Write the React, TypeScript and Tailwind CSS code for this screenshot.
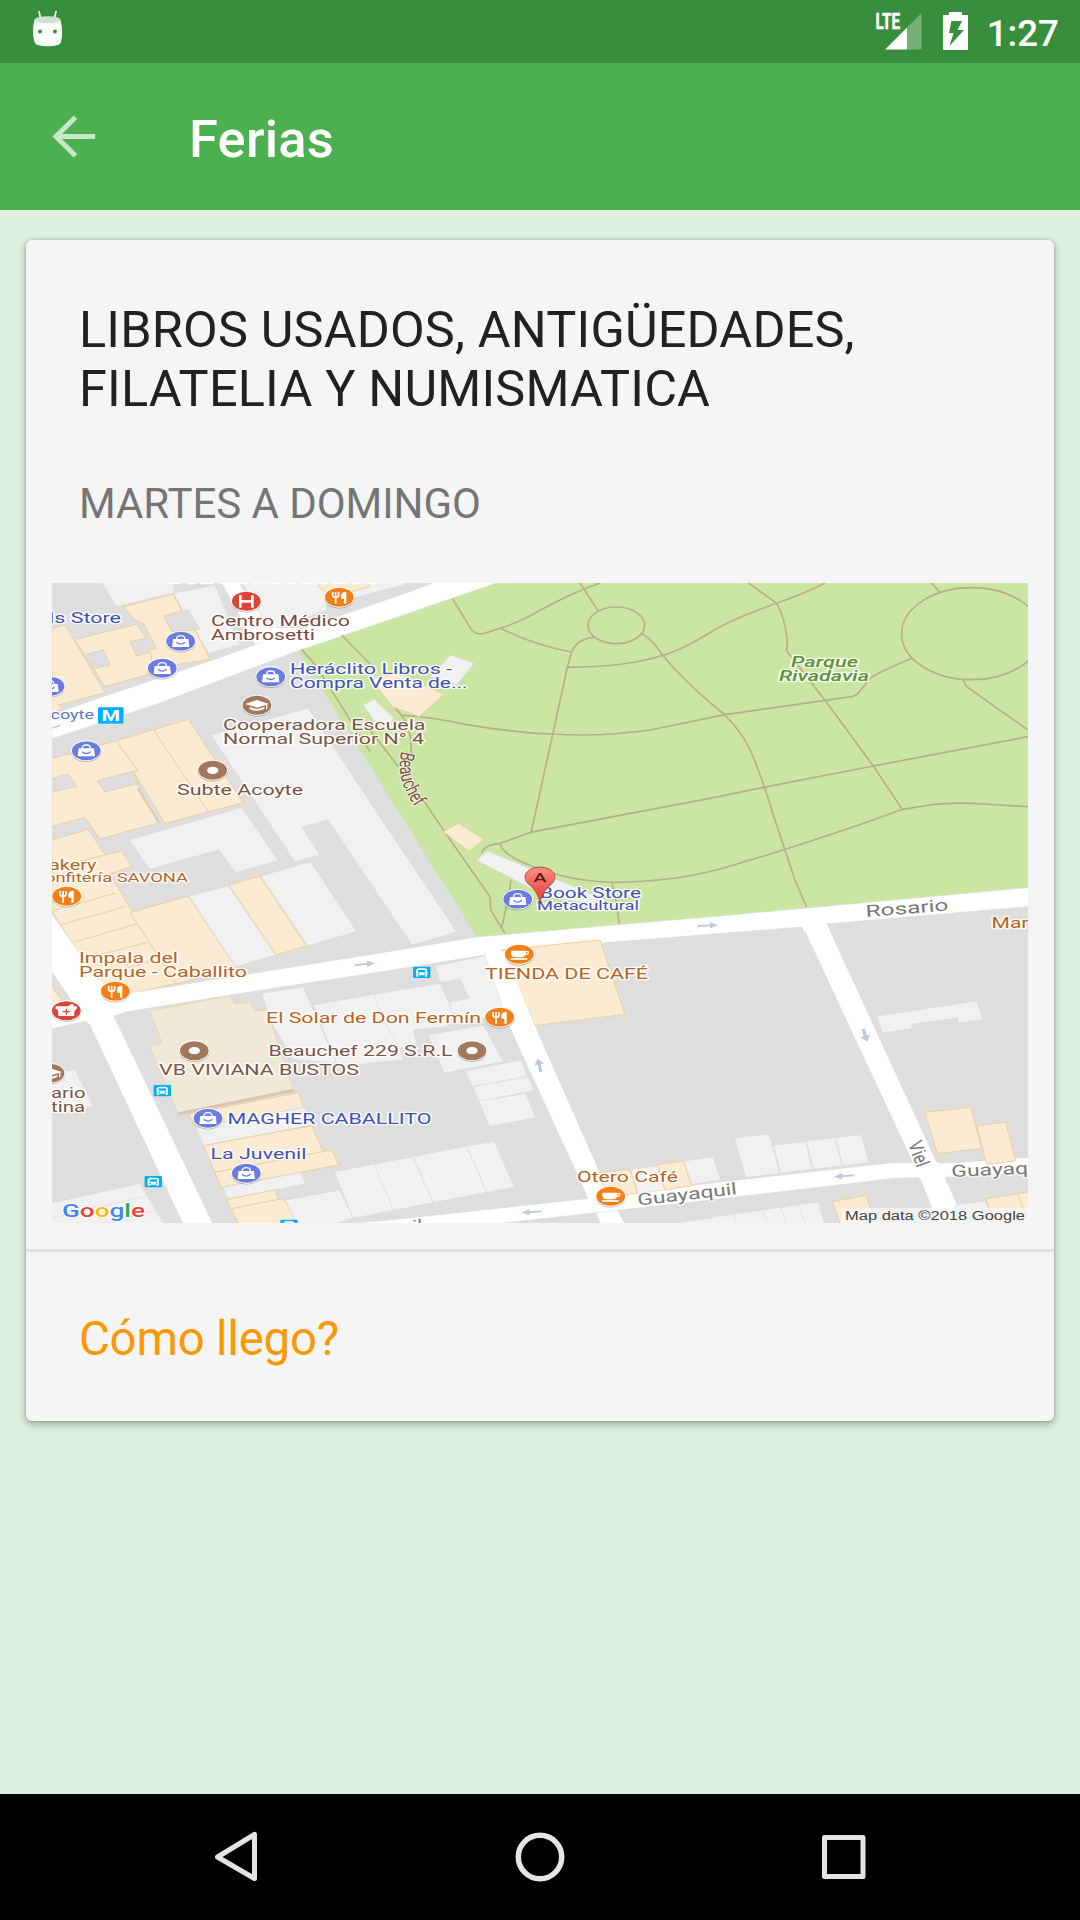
import type { ReactNode } from 'react';

type Kind = 'grey' | 'sand' | 'tan' | 'ground';

const FILL: Record<Kind, string> = {
  grey: 'fill-[#f1f1f1] stroke-[#d9d9d9]',
  sand: 'fill-[#faebd2] stroke-[#ebd0a0]',
  tan: 'fill-[#f0e9d8] stroke-[#ecd7ae]',
  ground: 'fill-[#dedede] stroke-[#e3d2b3]',
};

/** Map tile: geometry inside is in third-pixels from the tile's origin. */
function Tile({ x, y, children }: { x: number; y: number; children: ReactNode }) {
  return <g transform={`translate(${x} ${y}) scale(0.33333)`}>{children}</g>;
}

function Lots({ items }: { items: [Kind, string][] }) {
  return (
    <>
      {items.map(([kind, points]) => (
        <polygon key={points} points={points} className={FILL[kind]} strokeWidth={kind === 'grey' ? 2 : 3} />
      ))}
    </>
  );
}

const C = {
  shop: '#3f51b5',
  food: '#b5651d',
  place: '#795548',
  road: '#777777',
};

type LabelProps = { x: number; y: number; w: number; color: string; size?: number; rotate?: number; children: string };

function Label({ x, y, w, color, size = 14, rotate = 0, children }: LabelProps) {
  return (
    <text
      x={x}
      y={y}
      textLength={w}
      lengthAdjust="spacingAndGlyphs"
      fontSize={size}
      fill={color}
      stroke="#ffffff"
      strokeOpacity={0.85}
      strokeWidth={2.6}
      strokeLinejoin="round"
      paintOrder="stroke"
      transform={rotate ? `rotate(${rotate} ${x} ${y})` : undefined}
    >
      {children}
    </text>
  );
}

function Badge({ x, y, color, children }: { x: number; y: number; color: string; children: ReactNode }) {
  return (
    <g transform={`translate(${x} ${y}) scale(0.33333)`}>
      <ellipse cx="0" cy="3" rx="46" ry="31" fill="#000" opacity="0.22" />
      <ellipse rx="46" ry="31" fill="#fff" />
      <ellipse rx="43" ry="28.5" fill={color} />
      {children}
    </g>
  );
}

const Shop = ({ x, y }: { x: number; y: number }) => (
  <Badge x={x} y={y} color="#6b7ce0">
    <path d="M-12 -6V-8Q-12 -17 0 -17Q12 -17 12 -8V-6" fill="none" stroke="#fff" strokeWidth="4" />
    <path d="M-23 -7H23L26 17H-26Z" fill="#fff" />
    <path d="M-13 3Q0 14 13 3" fill="none" stroke="#6b7ce0" strokeWidth="4" />
  </Badge>
);

const Food = ({ x, y }: { x: number; y: number }) => (
  <Badge x={x} y={y} color="#f57f17">
    <path d="M-20 -16V-6Q-20 0 -11 0Q-2 0 -2 -6V-16M-11 -16V19" fill="none" stroke="#fff" strokeWidth="5" />
    <path d="M21 -17V19H14V4H5V-6Q6 -17 21 -17Z" fill="#fff" />
  </Badge>
);

const Cafe = ({ x, y }: { x: number; y: number }) => (
  <Badge x={x} y={y} color="#f57f17">
    <path d="M-25 -11H20V-3Q18 9 8 9H-12Q-25 9 -25 -3Z" fill="#fff" />
    <path d="M19 -8H25Q28 -8 27 -3Q25 1 17 1" fill="none" stroke="#fff" strokeWidth="4" />
    <path d="M-26 14H24" stroke="#fff" strokeWidth="5" />
  </Badge>
);

const School = ({ x, y }: { x: number; y: number }) => (
  <Badge x={x} y={y} color="#a1785c">
    <path d="M-36 -4L0 -16L36 -4L0 7Z" fill="#fff" />
    <path d="M-22 5L0 12L22 5V11Q0 22 -22 11Z" fill="#fff" />
    <path d="M29 -3V12" stroke="#fff" strokeWidth="4" />
  </Badge>
);

const Dot = ({ x, y }: { x: number; y: number }) => (
  <Badge x={x} y={y} color="#a1785c">
    <ellipse rx="17" ry="11" fill="#fff" />
  </Badge>
);

const Bus = ({ x, y }: { x: number; y: number }) => (
  <g transform={`translate(${x} ${y}) scale(0.33333)`}>
    <rect x="-26" y="-17" width="52" height="34" rx="3" fill="#00b0ff" />
    <path d="M-17 -4Q-17 -12 -8 -12H8Q17 -12 17 -4V9H-17Z" fill="#fff" />
    <path d="M-11 -7H11V0H-11Z" fill="#00b0ff" />
    <circle cx="-10" cy="5" r="2.5" fill="#00b0ff" />
    <circle cx="10" cy="5" r="2.5" fill="#00b0ff" />
    <path d="M-13 9V13M13 9V13" stroke="#fff" strokeWidth="6" />
  </g>
);

const Arrow = ({ x, y, r }: { x: number; y: number; r: number }) => (
  <path d="M-10 -.9H2V-3.2L10 0L2 3.2V.9H-10Z" fill="#bfc8da" transform={`translate(${x} ${y}) rotate(${r})`} />
);

function ParkMap() {
  return (
    <svg viewBox="52 583 976 640" className="mx-[26px] block h-[640px] w-[976px] overflow-hidden font-['Roboto',sans-serif]">
      <defs>
        <linearGradient id="pin" x1="0" y1="0" x2="0" y2="1">
          <stop offset="0" stopColor="#fb8f85" />
          <stop offset="1" stopColor="#ea3b33" />
        </linearGradient>
      </defs>
      <rect x="52" y="583" width="976" height="640" fill="#dedede" />

      <polygon points="497,583 1028,583 1028,888 720,916 477,937 298,651" fill="#cbe6a3" />

      <Tile x={40} y={570}>
        <Lots
          items={[
            ['grey', '180,30 230,110 405,68 395,30'],
            ['grey', '400,70 525,45 600,225 505,250 465,180 480,178 445,120 430,122'],
            ['grey', '600,30 860,30 860,120 690,182'],
            ['grey', '850,30 1110,30 1090,45 880,100'],
            ['sand', '835,50 850,30 980,30 990,50 880,80'],
            ['sand', '250,110 400,72 425,122 372,138 395,185 465,180 510,268 340,295 325,240 350,235 310,160 285,150'],
            ['sand', '36,175 75,165 195,368 55,405 70,415 36,430'],
            ['sand', '105,208 290,163 320,205 270,215 290,258 330,245 345,308 195,350'],
            ['ground', '130,255 190,240 210,285 165,295'],
            ['sand', '36,565 230,512 293,602 172,633 195,665 275,615 358,758 180,807 135,742 36,770'],
            ['sand', '230,512 445,448 610,698 375,760 280,605 293,602'],
            ['ground', '172,633 275,605 295,640 195,665'],
            ['ground', '30,628 85,612 110,648 30,668'],
          ]}
        />
        <path d="M340 478L505 725" stroke="#ebd0a0" strokeWidth="3" fill="none" />
        <path d="M293 655L355 755" stroke="#d6ceba" strokeWidth="7" fill="none" />
      </Tile>
      <polygon points="211,735 308,708 380,817 457,932 412,945 328,820 302,827 320,855 295,862" className={FILL.grey} strokeWidth="0.7" />

      <Tile x={40} y={800}>
        <Lots
          items={[
            ['grey', '268,120 605,22 715,182 587,218 537,150 328,208'],
            ['sand', '36,120 145,88 195,165 245,153 275,200 210,222 355,470 410,550 270,582 185,565 36,335'],
            ['sand', '270,338 445,288 587,500 550,510 410,552'],
            ['grey', '447,288 565,257 708,465 587,500'],
            ['sand', '567,255 660,228 800,438 708,465'],
            ['grey', '662,228 812,185 950,395 803,437'],
            ['sand', '30,550 72,610 30,625'],
          ]}
        />
        <path d="M36 333L225 280M60 375L255 320M100 427L290 372M135 475L325 427M200 520L350 480M195 165L36 205" stroke="#ebd0a0" strokeWidth="3" fill="none" />
      </Tile>

      <Tile x={380} y={800}>
        <Lots
          items={[
            ['grey', '-200,615 -20,583 180,550 225,645 200,680 100,690 110,735 60,745 70,780 -130,800'],
            ['grey', '165,497 315,468 392,640 330,660 215,640 210,605 268,595 240,538 180,548'],
            ['grey', '-355,580 -230,560 -130,790 -260,778 -330,660'],
          ]}
        />
        <path d="M-20 583L10 660L60 745M-175 680L-130 790" stroke="#d9d9d9" strokeWidth="2" fill="none" />
      </Tile>

      <Tile x={40} y={1010}>
        <Lots
          items={[
            ['tan', '330,2 570,-43 585,-18 630,-22 645,2 680,0 762,242 415,312 328,108 365,98'],
            ['sand', '445,312 775,248 793,292 468,352'],
            ['grey', '468,352 793,292 815,345 490,407'],
            ['sand', '490,407 815,347 850,425 525,487'],
            ['sand', '525,487 875,420 897,465 543,532'],
            ['grey', '548,532 780,488 798,522 565,567'],
            ['sand', '560,568 705,540 715,568 735,570 775,648 600,648'],
            ['grey', '735,570 900,540 940,625 850,650 775,650'],
            ['grey', '30,580 300,520 375,648 30,648'],
            ['grey', '30,192 105,178 160,288 100,300 30,310'],
          ]}
        />
        <path d="M415 311L762 241" stroke="#dcc4b2" strokeWidth="9" />
        <path d="M36 625L320 558M150 648L345 602" stroke="#d9d9d9" strokeWidth="2" />
        <path d="M575 596L715 568" stroke="#ebd0a0" strokeWidth="3" />
      </Tile>

      <Tile x={380} y={1010}>
        <Lots
          items={[
            ['grey', '145,75 310,45 370,155 192,190'],
            ['grey', '255,182 425,150 443,200 278,230'],
            ['grey', '278,230 443,200 463,242 297,274'],
            ['grey', '297,274 437,250 467,323 327,350'],
            ['grey', '-138,485 98,440 160,578 -80,625'],
            ['grey', '98,440 260,408 320,547 160,578'],
            ['grey', '260,408 343,394 403,532 320,547'],
            ['grey', '870,642 1022,618 1315,575 1335,645'],
          ]}
        />
        <path d="M-18 463L40 600" stroke="#d9d9d9" strokeWidth="2" />
        <path d="M965 628L970 642" stroke="#d9d9d9" strokeWidth="2" />
      </Tile>

      <g fill="#ffffff" stroke="#d8d8d8" strokeWidth="0.5">
        <polygon points="220,580 237,580 271,630 290,650 257,648" />
        <polygon points="45,717 105,696 210,661 257,644 380,602 412,591 440,580 505,580 380,623 300,650 160,703 45,741" />
        <polygon points="45,904 102,985 130,993 230,977 380,953 477,937 720,916 1035,887 1035,906 826,924 802,927 600,943 485,955 380,972 230,995 113,1014 87,1021 45,1030 45,1005 73,1003 45,962" />
        <polygon points="87,1019 112,1012 214,1226 184,1226" />
        <polygon points="484,953 502,950 528,1010 600,1173 612,1200 626,1226 602,1226 588,1198 510,1028" />
        <polygon points="802,925 826,922 937,1163 945,1178 967,1226 939,1226 920,1178" />
        <polygon points="340,1224 380,1221 593,1198 720,1182 890,1163 950,1163 1035,1157 1035,1172 957,1177 897,1178 710,1200 503,1223 490,1228 340,1228" />
      </g>
      <g fill="#ffffff">
        <polygon points="257,650 272,628 300,628 300,646" />
        <polygon points="70,990 100,980 125,1012 88,1024" />
        <polygon points="484,948 500,948 506,962 488,962" />
        <polygon points="800,920 824,918 830,932 804,932" />
        <polygon points="585,1189 606,1187 616,1207 592,1209" />
        <polygon points="914,1164 938,1162 946,1179 920,1180" />
      </g>

      <g fill="none" stroke="#b9ad8b" strokeWidth="5" strokeLinejoin="round">
        <Tile x={40} y={570}>
          <path d="M785 238L830 290L990 545M905 195L990 282" />
        </Tile>
        <Tile x={380} y={570}>
          <path d="M218 87L272 175Q285 197 312 190Q400 165 455 135Q580 65 662 39" />
          <path d="M362 175Q460 225 575 246M600 39L654 122" />
          <ellipse cx="709" cy="166" rx="85" ry="55" />
          <path d="M642 202Q590 207 575 246L562 292L475 690L453 787" />
          <path d="M562 292Q740 292 848 256Q900 242 990 188" />
          <path d="M785 192Q810 200 848 256Q900 320 990 398" />
          <path d="M60 435Q150 440 260 464Q420 490 520 492Q650 502 810 480L1035 434" />
          <path d="M45 415Q100 460 93 560M-30 480L55 590M130 690L190 780M450 787L990 685" />
        </Tile>
        <Tile x={710} y={570}>
          <path d="M0 188Q60 150 200 100Q290 68 345 39M115 39L200 100Q222 135 232 210L230 243L345 391L490 588L578 720" />
          <path d="M45 434L345 391L425 380Q440 375 445 370L480 325Q500 310 605 265" />
          <ellipse cx="785" cy="191" rx="210" ry="138" />
          <path d="M665 39L690 68M760 330Q765 350 780 357L954 480" />
          <path d="M0 398L45 435Q110 500 135 575Q170 665 185 720L255 930L290 1012" />
          <path d="M0 685L160 652L490 588L954 500M30 897Q330 810 578 718L640 708Q720 695 820 702L954 710" />
        </Tile>
        <Tile x={380} y={800}>
          <path d="M453 97L360 130Q310 135 305 160M360 130Q365 160 435 190Q560 245 700 247Q880 245 1020 207" />
          <path d="M695 250Q705 270 718 372M392 240Q395 250 365 385M190 90L330 290L332 330L375 400" />
        </Tile>
      </g>

      <Tile x={380} y={570}>
        <Lots
          items={[
            ['sand', '-30,325 60,310 190,373 118,440 38,410'],
            ['grey', '150,320 212,255 282,280 230,345'],
            ['grey', '-50,405 -18,388 42,445 25,460 -15,455'],
          ]}
        />
      </Tile>
      <Tile x={380} y={800}>
        <Lots
          items={[
            ['sand', '190,95 235,70 312,118 268,154'],
            ['grey', '290,180 322,153 655,290 640,310 560,300 480,280'],
            ['sand', '365,450 660,420 735,643 465,677'],
          ]}
        />
        <polygon points="355,455 372,455 470,690 445,690" fill="#fff" />
      </Tile>
      <Tile x={380} y={1010}>
        <Lots
          items={[
            ['sand', '650,490 750,478 772,550 690,560'],
            ['grey', '752,478 832,467 855,540 775,550'],
            ['sand', '832,463 910,453 935,527 855,540'],
            ['grey', '912,453 1000,440 1022,510 935,523'],
          ]}
        />
      </Tile>
      <Tile x={710} y={880}>
        <Lots
          items={[
            ['sand', '645,697 783,682 815,805 682,821'],
            ['sand', '800,737 887,726 917,843 830,853'],
            ['grey', '500,408 800,363 820,418 747,430 742,414 605,433 607,446 517,459'],
            ['grey', '73,773 177,762 210,880 107,893'],
            ['grey', '190,796 287,784 308,868 212,880'],
            ['grey', '289,782 375,773 397,857 309,868'],
            ['grey', '376,773 455,764 477,848 398,857'],
            ['sand', '367,965 467,946 500,1035 392,1035'],
            ['sand', '828,957 960,935 960,1035 850,1035'],
            ['grey', '735,975 825,962 845,1010 740,1010'],
          ]}
        />
        <path d="M70 1003L80 1030M155 990L175 1030M212 983L230 1030M265 975L285 1030" stroke="#d9d9d9" strokeWidth="2" />
        <path d="M922 941L950 1010" stroke="#ebd0a0" strokeWidth="3" />
      </Tile>

      <Arrow x={365} y={964} r={-6} />
      <Arrow x={708} y={925.5} r={-3} />
      <Arrow x={531.5} y={1212} r={176} />
      <Arrow x={844} y={1176} r={176} />
      <path d="M-1.6 6.5V-1H-5L-.5 -7L5 -1H1.6V6.5Z" fill="#bfc8da" transform="translate(539.5 1065.5) rotate(-12)" />
      <path d="M-1.6 6.5V-1H-5L-.5 -7L5 -1H1.6V6.5Z" fill="#bfc8da" transform="translate(865 1035) rotate(165)" />
      <path d="M52 728L60 725.500" stroke="#bfc8da" strokeWidth="1.600" />
      <path d="M167 583.500H375" stroke="#fff" strokeWidth="1.500" strokeDasharray="14 6 9 4" />

      <Shop x={180.7} y={641.3} />
      <Shop x={162.3} y={668.3} />
      <Shop x={50} y={686.3} />
      <Shop x={270.7} y={676.7} />
      <Shop x={86.3} y={750.7} />
      <Shop x={517.7} y={899.3} />
      <Shop x={208} y={1118.3} />
      <Shop x={246.3} y={1173.3} />
      <Food x={339.3} y={597.3} />
      <Food x={66.7} y={896.3} />
      <Food x={115.3} y={991.3} />
      <Food x={499.7} y={1017.3} />
      <Cafe x={519.3} y={954.3} />
      <Cafe x={610.7} y={1196.3} />
      <School x={257} y={705.3} />
      <School x={50} y={1073.3} />
      <Dot x={212.7} y={770.3} />
      <Dot x={194.3} y={1050.7} />
      <Dot x={472} y={1050.7} />
      <Bus x={421.7} y={972.3} />
      <Bus x={162.3} y={1090.7} />
      <Bus x={153.3} y={1181.7} />
      <Bus x={289} y={1225.3} />
      <Badge x={246.3} y={601.3} color="#db4437">
        <path d="M-18 -18V19M18 -18V19M-18 0H18" stroke="#fff" strokeWidth="8" />
      </Badge>
      <Badge x={66.3} y={1010.7} color="#db4437">
        <path d="M-32 -13H5L16 -21L24 -17L20 -13H32V-6Q22 -3 24 16H-24Q-22 -3 -32 -6Z" fill="#fff" />
        <path d="M0 -6V12M-11 3H11" stroke="#db4437" strokeWidth="4" />
      </Badge>
      <rect x="97.300" y="706.700" width="27" height="17.600" rx="1.500" fill="#fff" />
      <rect x="98" y="707.200" width="25.600" height="16.600" rx="1.200" fill="#00b0ff" />
      <text x="101.500" y="720.500" textLength="18.500" lengthAdjust="spacingAndGlyphs" fontSize="14.500" fontWeight="700" fill="#fff">M</text>

      <Label x={49} y={623} w={72} color={C.shop}>ls Store</Label>
      <Label x={211} y={626} w={139} color="#7b4a3c">Centro Médico</Label>
      <Label x={211} y={640} w={104} color="#7b4a3c">Ambrosetti</Label>
      <Label x={290} y={674} w={162} color={C.shop}>Heráclito Libros -</Label>
      <Label x={290} y={688} w={177.5} color={C.shop}>Compra Venta de...</Label>
      <Label x={50.5} y={719} w={43.5} color="#5c74cc" size={13}>coyte</Label>
      <Label x={223} y={730} w={202.5} color={C.place}>Cooperadora Escuela</Label>
      <Label x={223} y={744} w={201} color={C.place}>Normal Superior N° 4</Label>
      <Label x={177} y={795} w={126} color={C.place}>Subte Acoyte</Label>
      <g fontStyle="italic" fontWeight="500">
        <Label x={791} y={666.5} w={67} color="#5a9433">Parque</Label>
        <Label x={779} y={680.5} w={90} color="#5a9433">Rivadavia</Label>
      </g>
      <Label x={49} y={870} w={47.5} color={C.food}>akery</Label>
      <Label x={45} y={882} w={143} color={C.food} size={12}>onfitería SAVONA</Label>
      <Label x={79} y={963} w={99} color={C.food}>Impala del</Label>
      <Label x={79} y={977} w={168} color={C.food}>Parque - Caballito</Label>
      <Label x={540} y={898} w={101} color={C.shop}>Book Store</Label>
      <Label x={537} y={910} w={102} color={C.shop} size={12.5}>Metacultural</Label>
      <Label x={485} y={979} w={163} color={C.food}>TIENDA DE CAFÉ</Label>
      <Label x={266} y={1023} w={215} color={C.food}>El Solar de Don Fermín</Label>
      <Label x={268.5} y={1056} w={184} color={C.place}>Beauchef 229 S.R.L</Label>
      <Label x={159} y={1075} w={200} color={C.place}>VB VIVIANA BUSTOS</Label>
      <Label x={227.5} y={1124} w={204} color={C.shop}>MAGHER CABALLITO</Label>
      <Label x={210.5} y={1159} w={96} color={C.shop}>La Juvenil</Label>
      <Label x={577} y={1182} w={101} color={C.food}>Otero Café</Label>
      <Label x={51} y={1098} w={34.5} color={C.place}>ario</Label>
      <Label x={51} y={1112} w={34} color={C.place}>tina</Label>
      <Label x={991.5} y={928} w={37} color={C.food}>Mar</Label>
      <Label x={866} y={917} w={83} color={C.road} size={16.5} rotate={-4.5}>Rosario</Label>
      <Label x={638} y={1205.5} w={100} color={C.road} size={16.5} rotate={-6.5}>Guayaquil</Label>
      <Label x={951.5} y={1177} w={77} color={C.road} size={16.5} rotate={-2.5}>Guayaq</Label>
      <Label x={413} y={1232} w={10} color={C.road} size={16.5} rotate={-5}>il</Label>
      <Label x={908} y={1144} w={26} color={C.road} size={20} rotate={70}>Viel</Label>
      <path id="beauchef" d="M401.500 751Q396.500 768 404 787Q409 800 419 813" fill="none" />
      <text fontSize="20" fill={C.place} stroke="#fff" strokeOpacity="0.8" strokeWidth="2" paintOrder="stroke">
        <textPath href="#beauchef" textLength="60" lengthAdjust="spacingAndGlyphs">Beauchef</textPath>
      </text>

      <ellipse cx="540" cy="902" rx="3" ry="1.500" fill="#333" opacity="0.3" />
      <path d="M540 902Q538.500 894 532 887Q525 882 525 877A15 10 0 0 1 555 877Q555 882 548 887Q541.500 894 540 902Z" fill="url(#pin)" stroke="#b3413c" strokeWidth="0.900" />
      <text x="533.500" y="881.500" textLength="13" lengthAdjust="spacingAndGlyphs" fontSize="13" fontWeight="500" fill="#5b1712">A</text>

      <text x="62" y="1216.500" textLength="83" lengthAdjust="spacingAndGlyphs" fontSize="18" fontWeight="500" stroke="#fff" strokeWidth="2" strokeOpacity="0.8" paintOrder="stroke">
        <tspan fill="#4285f4">G</tspan><tspan fill="#ea4335">o</tspan><tspan fill="#fbbc05">o</tspan><tspan fill="#4285f4">g</tspan><tspan fill="#34a853">l</tspan><tspan fill="#ea4335">e</tspan>
      </text>
      <rect x="841" y="1208" width="187" height="15" fill="#f5f5f5" opacity="0.75" />
      <text x="845" y="1219.500" textLength="180" lengthAdjust="spacingAndGlyphs" fontSize="12" fill="#444" fontFamily="Liberation Sans, sans-serif">Map data ©2018 Google</text>
    </svg>
  );
}

function StatusBar() {
  return (
    <div className="flex h-[63px] items-start justify-between bg-[#388e3c] pl-8 pr-[21px]">
      <svg className="mt-2 h-10 w-8" viewBox="32 8 32 40" aria-hidden="true">
        <path d="M39 11.500L40.500 18M56 11.500L54.500 18" stroke="#fff" strokeWidth="1.700" strokeLinecap="round" />
        <path d="M34.500 20Q48 25 60.500 20Q63.500 31 61 42Q60.500 44 58 45Q48 47.500 37.500 45Q35 44 34.500 42Q31.500 31 34.500 20Z" fill="#fff" />
        <ellipse cx="47.500" cy="19.800" rx="13" ry="3.500" fill="#cde3ce" />
        <circle cx="40" cy="31.500" r="2" fill="#388e3c" />
        <circle cx="55" cy="31.500" r="2" fill="#388e3c" />
      </svg>
      <div className="flex items-start">
        <svg className="mt-2 h-11 w-[48px]" viewBox="875 8 48 44" aria-hidden="true">
          <path d="M907 27.500L921.500 13V49.500H907Z" fill="#fff" opacity="0.3" />
          <path d="M885 49.500L907 27.500V49.500Z" fill="#fff" />
          <text x="875.500" y="29" textLength="24.500" lengthAdjust="spacingAndGlyphs" fontSize="22" fontWeight="700" fill="#fff" stroke="#fff" strokeWidth="0.500" fontFamily="Roboto, sans-serif">LTE</text>
        </svg>
        <svg className="ml-[18px] mt-2 h-11 w-7" viewBox="941 8 28 44" aria-hidden="true">
          <path fillRule="evenodd" d="M949 12H962V15H968V50H943V15H949ZM951.500 21L949 33H953.500L949.500 46L964 30H957.500L962 21Z" fill="#fff" />
        </svg>
        <span className="ml-[18px] mt-[12px] text-[36.750px] font-medium leading-[44px] text-white">1:27</span>
      </div>
    </div>
  );
}

function AppBar() {
  return (
    <header className="flex h-[147px] items-center bg-[#4caf50] pl-[51px]">
      <svg className="-mt-[2px] h-[44px] w-[46px]" viewBox="51 114 46 44" aria-hidden="true">
        <path d="M75.500 117.200L56 136.500L75.500 155.800M56 136.500H95" fill="none" stroke="#c9e7ca" strokeWidth="5" />
      </svg>
      <h1 className="ml-[92px] mt-[5px] text-[52.500px] font-medium leading-[62px] tracking-[0.2px] text-white">Ferias</h1>
    </header>
  );
}

function NavBar() {
  return (
    <nav className="flex h-[126px] items-center justify-between bg-black px-[211px]">
      <svg className="h-[54px] w-[50px]" viewBox="211 1830 50 54" fill="none" stroke="#e4e4e4" strokeWidth="5" strokeLinejoin="round">
        <path d="M254.500 1834.500V1878.500L217.500 1857Z" />
      </svg>
      <svg className="h-[54px] w-[54px]" viewBox="513 1830 54 54" fill="none" stroke="#e4e4e4" strokeWidth="5.500">
        <circle cx="540" cy="1857" r="21.700" />
      </svg>
      <svg className="h-[54px] w-[50px]" viewBox="819 1830 50 54" fill="none" stroke="#e4e4e4" strokeWidth="5" strokeLinejoin="round">
        <rect x="824.500" y="1837.500" width="38.500" height="39" />
      </svg>
    </nav>
  );
}

export default function App() {
  return (
    <div className="flex h-[1920px] w-[1080px] flex-col bg-[#dff0df] font-['Roboto',sans-serif]">
      <StatusBar />
      <AppBar />
      <main className="flex-1 px-[26px] pt-[30px]">
        <article className="h-[1181px] rounded-[6px] bg-[#f5f5f5] shadow-[0_3px_8px_rgba(0,0,0,0.32),0_0_3px_rgba(0,0,0,0.16)]">
          <div className="h-[343px] pl-[53px] pt-[60px]">
            <h2 className="text-[50.400px] leading-[59px] tracking-[0.19px] text-[#212121]">
              LIBROS USADOS, ANTIGÜEDADES,
              <br />
              FILATELIA Y NUMISMATICA
            </h2>
            <p className="mt-[61px] text-[42px] leading-[49px] tracking-[-0.06px] text-[#757575]">MARTES A DOMINGO</p>
          </div>
          <ParkMap />
          <div className="mt-[26px] h-[3px] bg-[#dfdfdf]" />
          <a className="block pl-[53px] pt-[59px] text-[47.250px] leading-[56px] tracking-[-0.16px] text-[#ff9800]">Cómo llego?</a>
        </article>
      </main>
      <NavBar />
    </div>
  );
}
